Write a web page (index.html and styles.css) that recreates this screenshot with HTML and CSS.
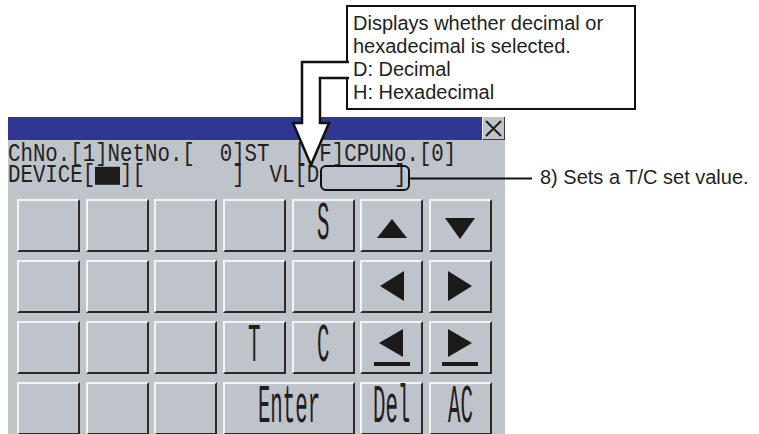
FILE: index.html
```html
<!DOCTYPE html>
<html>
    <head>
        <meta charset="utf-8">
        <link rel="stylesheet" href="styles.css">
    </head>
    <body>
        <div id="page">
            <div id="panel">
                <div id="titlebar">
                    <div id="title"></div>
                    <div id="close">
                        <svg width="21" height="21" viewBox="0 0 21 21">
                            <path d="M3 3 L18 18 M18 3 L3 18" stroke="#1e1e1e" stroke-width="2" fill="none"/>
                        </svg>
                    </div>
                </div>
                <div id="screen">
                    <div id="status">
                        <div class="line">ChNo.[1]NetNo.[  0]ST  [ F]CPUNo.[0]</div>
                        <div class="line">DEVICE[<span class="cursor"></span>][       ]  VL[D      ]</div>
                    </div>
                    <div id="keys">
                        <div class="key"></div>
                        <div class="key"></div>
                        <div class="key"></div>
                        <div class="key"></div>
                        <div class="key"><span class="cap">S</span></div>
                        <div class="key">
                            <svg class="tri-v" width="30" height="19" viewBox="0 0 30 19"><polygon points="0,19 15,0 30,19"/></svg>
                        </div>
                        <div class="key">
                            <svg class="tri-v" width="30" height="21" viewBox="0 0 30 21"><polygon points="0,0 30,0 15,21"/></svg>
                        </div>

                        <div class="key"></div>
                        <div class="key"></div>
                        <div class="key"></div>
                        <div class="key"></div>
                        <div class="key"></div>
                        <div class="key">
                            <svg width="24" height="30" viewBox="0 0 24 30"><polygon points="0,15 24,0 24,30"/></svg>
                        </div>
                        <div class="key">
                            <svg width="24" height="30" viewBox="0 0 24 30"><polygon points="0,0 24,15 0,30"/></svg>
                        </div>

                        <div class="key"></div>
                        <div class="key"></div>
                        <div class="key"></div>
                        <div class="key"><span class="cap">T</span></div>
                        <div class="key"><span class="cap">C</span></div>
                        <div class="key">
                            <svg width="36" height="37" viewBox="0 0 36 37"><polygon points="5,14 29,0 29,28"/><rect x="0" y="33" width="36" height="4"/></svg>
                        </div>
                        <div class="key">
                            <svg width="36" height="37" viewBox="0 0 36 37"><polygon points="6,0 30,14 6,28"/><rect x="0" y="33" width="36" height="4"/></svg>
                        </div>

                        <div class="key"></div>
                        <div class="key"></div>
                        <div class="key"></div>
                        <div class="key wide"><span class="cap">Enter</span></div>
                        <div class="key"><span class="cap">Del</span></div>
                        <div class="key"><span class="cap">AC</span></div>
                    </div>
                </div>
            </div>

            <div id="note">Displays whether decimal or<br>hexadecimal is selected.<br>D: Decimal<br>H: Hexadecimal</div>

            <svg id="marks" width="759" height="434" viewBox="0 0 759 434">
                <path d="M349 62 H302 V123 H293 L311 165 L329 123 H320 V78 H349" fill="#fff" stroke="#111" stroke-width="2.5"/>
                <rect x="321" y="166" width="88" height="24" rx="5" fill="none" stroke="#111" stroke-width="2"/>
                <path d="M409 178.5 H532" stroke="#111" stroke-width="2"/>
            </svg>

            <div id="label">8) Sets a T/C set value.</div>
        </div>
    </body>
</html>
```

FILE: styles.css
```css
html, body {
    margin:0;
    padding:0;
    background:white;
    overflow:hidden;
}

#page {
    position:relative;
    width:759px;
    height:434px;
    padding:117px 0px 0px 8px;
    box-sizing:border-box;
    overflow:hidden;
}

#panel {
    width:497px;
    background:#bfc3ca;
}

#titlebar {
    display:flex;
    height:23px;
}

#title {
    flex:1;
    background:#2f3792;
}

#close {
    width:23px;
    box-sizing:border-box;
    border-left:1px solid #eef0f3;
    border-right:1px solid #3a3a3a;
    border-bottom:1px solid #3a3a3a;
    background:#bfc3ca;
    display:flex;
    align-items:center;
    justify-content:center;
}

#screen {
    padding:4.3px 0px 0px 0px;
    height:294px;
}

/* GOT font is tall and narrow: mono face stretched a bit */
#status {
    font-family:"Liberation Mono", monospace;
    font-size:20.75px;
    line-height:17.5px;
    color:#222222;
    margin-bottom:19.7px;
    transform:scaleY(1.2);
    transform-origin:0 0;
}

.line {
    white-space:pre;
}

.cursor {
    display:inline-block;
    width:2ch;
    height:15px;
    background:#1e1e1e;
    vertical-align:-2px;
}

#keys {
    display:grid;
    grid-template-columns:repeat(7, 63px);
    grid-auto-rows:53px;
    column-gap:5.67px;
    row-gap:8px;
    margin-left:9px;
}

.key {
    box-sizing:border-box;
    border-style:solid;
    border-width:2px 2px 2px 2px;
    border-color:#f3f4f6 #2a2a2a #2a2a2a #f3f4f6;
    background:#bfc3ca;
    display:flex;
    align-items:center;
    justify-content:center;
}

.key svg {
    fill:#1a1a1a;
}

.tri-v {
    margin-top:6px;
}

.wide {
    grid-column:span 2;
}

.cap {
    display:inline-block;
    font-family:"Liberation Mono", monospace;
    font-size:54px;
    line-height:40px;
    color:#1e1e1e;
    transform:scaleX(0.384);
}

#note {
    position:absolute;
    left:346px;
    top:5px;
    width:290px;
    height:105px;
    box-sizing:border-box;
    border:2px solid #111111;
    padding:5px 0px 0px 5px;
    background:white;
    font-family:"Liberation Sans", Arial, sans-serif;
    font-size:20px;
    line-height:23px;
    color:#231f20;
}

#marks {
    position:absolute;
    left:0px;
    top:0px;
}

#label {
    position:absolute;
    left:540px;
    top:166px;
    font-family:"Liberation Sans", Arial, sans-serif;
    font-size:20px;
    line-height:22px;
    color:#231f20;
    white-space:nowrap;
}
```
